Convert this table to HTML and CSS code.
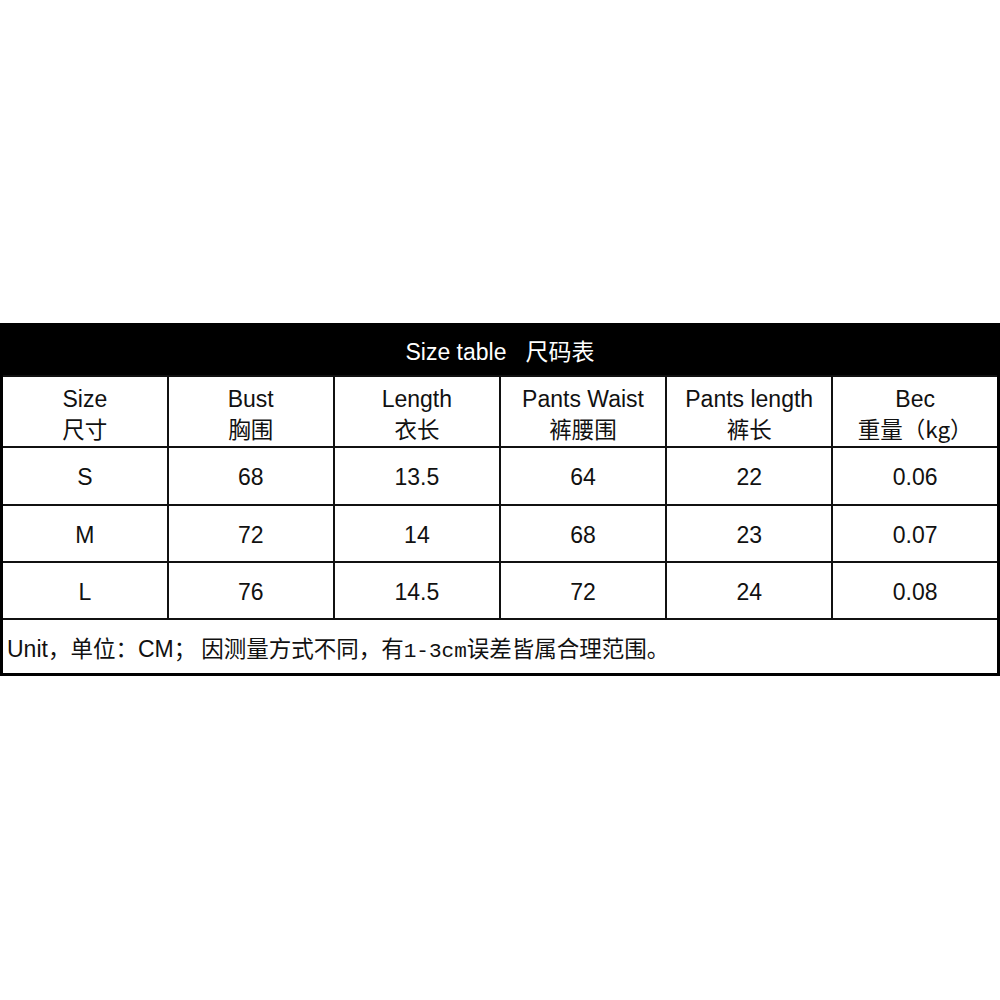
FILE: index.html
```html
<!DOCTYPE html>
<html lang="zh-CN">
<head>
<meta charset="utf-8">
<title>Size table</title>
<link rel="stylesheet" href="styles.css">
</head>
<body>
<div class="page">
  <table class="size-table">
    <colgroup>
      <col><col><col><col><col><col>
    </colgroup>
    <thead>
      <tr class="title-row">
        <th colspan="6"><span class="title-en">Size table</span><span class="title-cn">尺码表</span></th>
      </tr>
      <tr class="head-row">
        <th><span class="en">Size</span><span class="cn">尺寸</span></th>
        <th><span class="en">Bust</span><span class="cn">胸围</span></th>
        <th><span class="en">Length</span><span class="cn">衣长</span></th>
        <th><span class="en">Pants Waist</span><span class="cn">裤腰围</span></th>
        <th><span class="en">Pants length</span><span class="cn">裤长</span></th>
        <th><span class="en">Bec</span><span class="cn">重量（kg）</span></th>
      </tr>
    </thead>
    <tbody>
      <tr class="data-row first">
        <td>S</td><td>68</td><td>13.5</td><td>64</td><td>22</td><td>0.06</td>
      </tr>
      <tr class="data-row">
        <td>M</td><td>72</td><td>14</td><td>68</td><td>23</td><td>0.07</td>
      </tr>
      <tr class="data-row">
        <td>L</td><td>76</td><td>14.5</td><td>72</td><td>24</td><td>0.08</td>
      </tr>
      <tr class="note-row">
        <td colspan="6"><span class="note-en">Unit</span>，单位：<span class="note-en">CM</span>； 因测量方式不同，有<span class="mono">1-3cm</span>误差皆属合理范围。</td>
      </tr>
    </tbody>
  </table>
</div>
</body>
</html>
```

FILE: styles.css
```css
html, body {
  margin: 0;
  padding: 0;
  background: #ffffff;
}

.page {
  padding-top: 323px;
  width: 1000px;
}

.size-table {
  width: 1000px;
  border-collapse: collapse;
  table-layout: fixed;
  font-family: "Liberation Sans", "Noto Sans CJK SC", sans-serif;
  font-size: 23px;
  color: #111111;
  border-left: 3px solid #000;
  border-right: 3px solid #000;
  border-bottom: 3px solid #000;
}

.size-table th,
.size-table td {
  border: 2px solid #111;
  padding: 0;
  text-align: center;
  vertical-align: middle;
  font-weight: normal;
}

.title-row th {
  background: #000;
  color: #fff;
  height: 52px;
  border-color: #000;
  border-bottom: 1px solid #555;
  box-sizing: border-box;
}

.title-en {
  margin-right: 19px;
}

.head-row th {
  height: 71px;
  box-sizing: border-box;
  line-height: 29px;
  padding-top: 4px;
}

.head-row .en,
.head-row .cn {
  display: block;
}

.cn {
  font-family: "Noto Sans CJK SC", sans-serif;
  font-size: 22.5px;
}

.data-row td {
  height: 57px;
  box-sizing: border-box;
  padding-top: 3px;
}

.data-row.first td {
  height: 58px;
}

.note-row td {
  height: 55px;
  box-sizing: border-box;
  text-align: left;
  padding-left: 4px;
  padding-top: 2px;
  font-family: "Noto Sans CJK SC", sans-serif;
  font-size: 22.5px;
  border-bottom: 3px solid #000;
}

.note-en {
  font-family: "Liberation Sans", sans-serif;
  font-size: 23px;
}

.mono {
  font-family: "Liberation Mono", monospace;
  font-size: 21px;
}
```
